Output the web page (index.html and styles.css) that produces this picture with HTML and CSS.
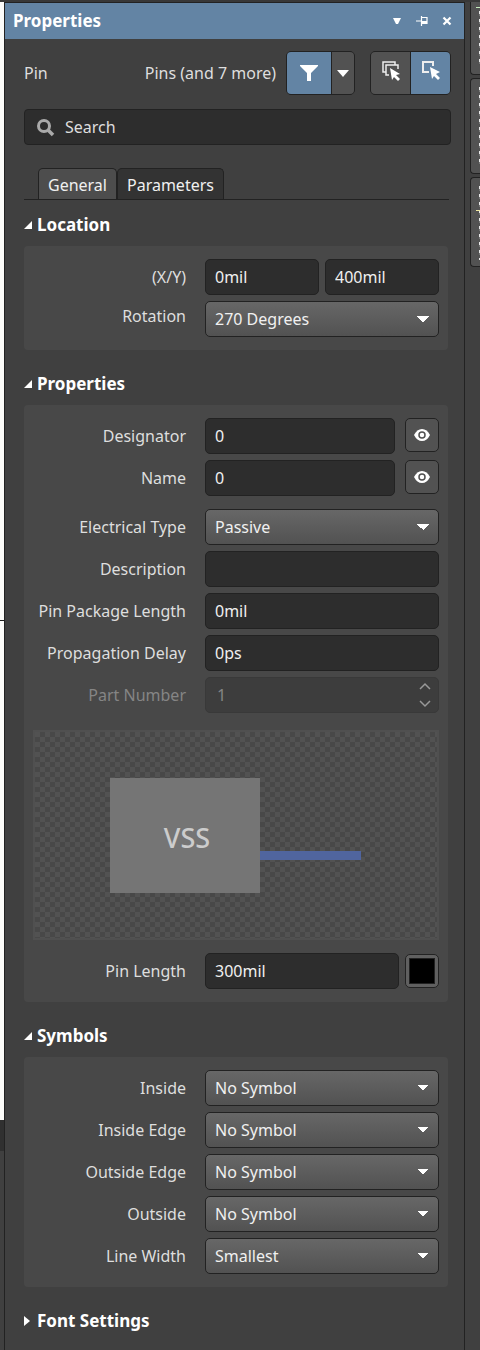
FILE: index.html
```html
<!DOCTYPE html>
<html lang="en">
<head>
<meta charset="utf-8">
<title>Properties</title>
<link rel="stylesheet" href="styles.css">
</head>
<body>
<div class="workspace">
  <div class="sheet-edge"><div class="sheet"></div><div class="sheet-end"></div></div>

  <main class="panel">
    <header class="titlebar">
      <h1>Properties</h1>
      <button class="win-button" aria-label="Panel menu"><svg width="8" height="8"><path d="M0 1h8L5 7H3z" fill="#fff"/></svg></button>
      <button class="win-button" aria-label="Pin panel"><svg width="12" height="10"><path d="M0 5h5M5.500 0v10M5 1.500h6v6H5" fill="none" stroke="#fff" stroke-width="1.200"/><path d="M5 5h6v3H5z" fill="#fff"/></svg></button>
      <button class="win-button" aria-label="Close panel"><svg width="10" height="10"><path d="M1.500 1.500l7 7M8.500 1.500l-7 7" stroke="#fff" stroke-width="2.200"/></svg></button>
    </header>

    <div class="toolbar">
      <span>Pin</span>
      <span class="scope">Pins (and 7 more)</span>
      <div class="group filter">
        <button class="tool on" aria-label="Filter"><svg width="20" height="18"><path d="M1 1h18v1l-7 7v8H8V9L1 2z" fill="#fff"/></svg></button>
        <button class="tool more" aria-label="Filter options"><svg width="12" height="7"><path d="M0 0h12L6 7z" fill="#fff"/></svg></button>
      </div>
      <div class="group modes">
        <button class="tool" aria-label="Select multiple"><svg width="20" height="22"><g fill="none" stroke="#eee" stroke-width="1.500"><path d="M5 12H2V2h12v3"/><path d="M8 15H5V5h12v4"/></g><path d="M9 8l10 6-4 1 4 4-2 2-4-4-2 3z" fill="#fff"/></svg></button>
        <button class="tool on" aria-label="Select single"><svg width="20" height="22"><path d="M8 12H2V2h10v4" fill="none" stroke="#eee" stroke-width="2"/><path d="M9 7l10 5-4 2 4 4-2 2-4-4-2 3z" fill="#fff"/></svg></button>
      </div>
    </div>

    <label class="search">
      <svg width="19" height="19"><circle cx="8" cy="8" r="5.500" fill="none" stroke="#aaa" stroke-width="3"/><path d="M12 12l5 5" stroke="#aaa" stroke-width="3.500"/></svg>
      <input type="text" placeholder="Search" aria-label="Search">
    </label>

    <nav class="tabs">
      <button class="tab active">General</button>
      <button class="tab">Parameters</button>
    </nav>

    <section>
      <h2><svg width="10" height="10"><path d="M0 9L8 1v8z" fill="#fff"/></svg>Location</h2>
      <div class="card">
        <div class="row"><label for="x">(X/Y)</label><div class="pair"><input id="x" type="text" value="0mil"><input type="text" value="400mil" aria-label="Y"></div></div>
        <div class="row"><label class="rotation" for="rot">Rotation</label><select id="rot"><option>270 Degrees</option></select></div>
      </div>
    </section>

    <section>
      <h2><svg width="10" height="10"><path d="M0 9L8 1v8z" fill="#fff"/></svg>Properties</h2>
      <div class="card">
        <div class="row"><label for="des">Designator</label><div class="with-eye"><input id="des" type="text" value="0"><button class="eye" aria-label="Show designator"><svg width="16" height="14"><path d="M0 7Q3 1 8 1t8 6q-3 6-8 6T0 7z" fill="#fff"/><circle cx="8" cy="7" r="3" fill="none" stroke="#505050" stroke-width="1.500"/></svg></button></div></div>
        <div class="row"><label for="name">Name</label><div class="with-eye"><input id="name" type="text" value="0"><button class="eye" aria-label="Show name"><svg width="16" height="14"><path d="M0 7Q3 1 8 1t8 6q-3 6-8 6T0 7z" fill="#fff"/><circle cx="8" cy="7" r="3" fill="none" stroke="#505050" stroke-width="1.500"/></svg></button></div></div>
        <div class="row spaced"><label for="etype">Electrical Type</label><select id="etype"><option>Passive</option></select></div>
        <div class="row"><label for="desc">Description</label><input id="desc" type="text"></div>
        <div class="row"><label for="ppl">Pin Package Length</label><input id="ppl" type="text" value="0mil"></div>
        <div class="row"><label for="delay">Propagation Delay</label><input id="delay" type="text" value="0ps"></div>
        <div class="row disabled"><label for="part">Part Number</label><div class="spinner"><input id="part" type="text" value="1" disabled><svg width="12" height="28"><path d="M1 8l5-5 5 5M1 20l5 5 5-5" fill="none" stroke="#999" stroke-width="1.500"/></svg></div></div>
        <div class="preview"><div class="chip">VSS</div><div class="lead"></div></div>
        <div class="row"><label for="plen">Pin Length</label><div class="with-color"><input id="plen" type="text" value="300mil"><button class="color" aria-label="Pin color"><span></span></button></div></div>
      </div>
    </section>

    <section>
      <h2><svg width="10" height="10"><path d="M0 9L8 1v8z" fill="#fff"/></svg>Symbols</h2>
      <div class="card">
        <div class="row"><label for="s1">Inside</label><select id="s1"><option>No Symbol</option></select></div>
        <div class="row"><label for="s2">Inside Edge</label><select id="s2"><option>No Symbol</option></select></div>
        <div class="row"><label for="s3">Outside Edge</label><select id="s3"><option>No Symbol</option></select></div>
        <div class="row"><label for="s4">Outside</label><select id="s4"><option>No Symbol</option></select></div>
        <div class="row"><label for="s5">Line Width</label><select id="s5"><option>Smallest</option></select></div>
      </div>
    </section>

    <section>
      <h2><svg width="10" height="12"><path d="M0 1l6 5-6 5z" fill="#fff"/></svg>Font Settings</h2>
    </section>
  </main>

  <aside class="dock"><div class="dock-tab first"></div><div class="dock-tab"></div><div class="dock-tab last"></div></aside>
</div>
</body>
</html>
```
FILE: styles.css
```css
* { box-sizing: border-box; }
body {
  margin: 0;
  background: #404040;
  color: #dedede;
  font: 16px/20px "Noto Sans", "Open Sans", sans-serif;
}
button, input, select { font: inherit; color: #f0f0f0; margin: 0; padding: 0; }
svg { display: block; flex: none; }

.workspace {
  display: grid;
  grid-template-columns: 4px minmax(0, 1fr) 15px;
  min-height: 100vh;
  border-top: 2px solid #383838;
}
.sheet-edge { display: flex; flex-direction: column; }
.sheet { flex: 1118; background: linear-gradient(#1c1c1c, #1c1c1c) 0 618px / 100% 1px no-repeat #fcfcfa; }
.sheet-end { flex: 230; background: linear-gradient(#303030 31px, #404040 31px); }

.panel { border: 1px solid #222; border-bottom: 0; min-width: 0; }
.titlebar {
  display: flex;
  align-items: center;
  gap: 13px;
  height: 36px;
  padding: 0 11px 0 8px;
  background: #6384a4;
}
h1 { flex: 1; margin: 0; font-size: 17px; color: #fff; }
.win-button { display: grid; place-items: center; width: 12px; height: 20px; border: 0; background: none; }

.toolbar { display: flex; align-items: center; padding: 12px 13px 0 19px; }
.scope { margin: 0 10px 0 auto; }
.group { display: flex; height: 44px; border: 1px solid #222; border-radius: 5px; overflow: hidden; background: #222; gap: 1px; }
.filter { width: 69px; margin-right: 15px; }
.modes { width: 81px; }
.tool { flex: 1; display: grid; place-items: center; border: 0; background: #525252; }
.modes .tool { padding-bottom: 4px; }
.tool.on { background: #6384a4; }
.tool.more { flex: none; width: 22px; }

.search {
  display: flex;
  align-items: center;
  gap: 10px;
  height: 36px;
  margin: 14px 13px 0 19px;
  padding: 0 11px;
  background: #2d2d2d;
  border: 1px solid #222;
  border-radius: 4px;
}
.search input { flex: 1; min-width: 0; border: 0; background: none; outline: 0; }
.search input::placeholder { color: #dedede; opacity: 1; }

.tabs { display: flex; margin: 23px 15px 0 19px; padding-left: 14px; border-bottom: 1px solid #222; }
.tab {
  height: 31px;
  padding: 2px 9px 0;
  border: 1px solid #222;
  border-bottom: 0;
  border-radius: 5px 5px 0 0;
  background: #333;
}
.tab.active { background: #4d4d4d; }

section { margin: 0 16px 24px 19px; }
section:last-child { margin-bottom: 0; }
.tabs + section { margin-top: 15px; }
h2 { display: flex; align-items: center; gap: 3px; height: 20px; margin: 0 0 11px; font-size: 17px; line-height: 20px; color: #fff; }
.card { display: grid; gap: 6px; padding: 13px 9px; background: #484848; border-radius: 4px; }
.row { display: grid; grid-template-columns: 153px minmax(0, 1fr); gap: 19px; align-items: center; }
.row > label { text-align: right; white-space: nowrap; }
.row > .rotation { padding-bottom: 6px; }
.spaced { margin-top: 7px; }
.card input, .card select {
  width: 100%;
  min-width: 0;
  height: 36px;
  padding: 0 9px;
  border: 1px solid #222;
  border-radius: 5px;
  background: #2d2d2d;
}
.card select {
  appearance: none;
  background:
    conic-gradient(from -45deg at 50% 100%, #fff 90deg, transparent 0) right 9px top 14px / 12px 6px no-repeat,
    linear-gradient(#676767, #525252);
}
.pair { display: grid; grid-template-columns: 1fr 1fr; gap: 6px; }
.with-eye { display: grid; grid-template-columns: minmax(0, 1fr) 34px; gap: 10px; align-items: center; }
.with-color { display: grid; grid-template-columns: minmax(0, 1fr) 34px; gap: 6px; align-items: center; }
.eye, .color { display: grid; place-items: center; height: 34px; border: 1px solid #222; border-radius: 5px; background: #525252; }
.with-eye { align-items: start; }
.color { background: #606060; }
.color span { width: 26px; height: 26px; background: #000; border: 1px solid #222; }
.spinner { display: flex; align-items: center; background: #3d3d3d; border: 1px solid #393939; border-radius: 5px; padding-right: 7px; height: 36px; }
.card .spinner input { flex: 1; height: 34px; border: 0; background: none; padding-left: 11px; color: #858585; }
.disabled > label { color: #858585; }

.preview {
  display: grid;
  grid-template-columns: 150px 101px;
  place-content: center start;
  height: 210px;
  margin: 11px 0 7px;
  padding-left: 75px;
  border: 2px solid #505050;
  background: repeating-conic-gradient(#484848 0 25%, #525252 0 50%) 0 0 / 10px 10px;
}
.chip { display: grid; place-items: center; height: 115px; padding: 6px 0 0 4px; background: #757575; color: #ccc; font-size: 27px; font-weight: 500; }
.lead { height: 9px; margin-top: 73px; background: #50659e; }

.dock { padding-left: 5px; }
.dock-tab {
  height: 96px;
  margin-bottom: 3px;
  border: 1px solid #222;
  border-right: 0;
  border-radius: 4px 0 0 4px;
  background:
    repeating-linear-gradient(#e8e8e8 0 3px, #777 3px 5px, #525252 5px 8px) right 8px / 1px 80px no-repeat,
    #525252;
}
.dock-tab.first {
  height: 73px;
  border-top: 0;
  border-top-left-radius: 0;
  background:
    linear-gradient(#c8f0c0, #c8f0c0) right 5px / 4px 1px no-repeat,
    repeating-linear-gradient(#e8e8e8 0 3px, #777 3px 5px, #525252 5px 8px) right 9px / 1px 56px no-repeat,
    #525252;
}
.dock-tab.last {
  height: 90px;
  background:
    linear-gradient(#f0e8a0, #f0e8a0) right 32px / 4px 1px no-repeat,
    repeating-linear-gradient(#e8e8e8 0 3px, #777 3px 5px, #525252 5px 8px) right 8px / 1px 74px no-repeat,
    #525252;
}
```
